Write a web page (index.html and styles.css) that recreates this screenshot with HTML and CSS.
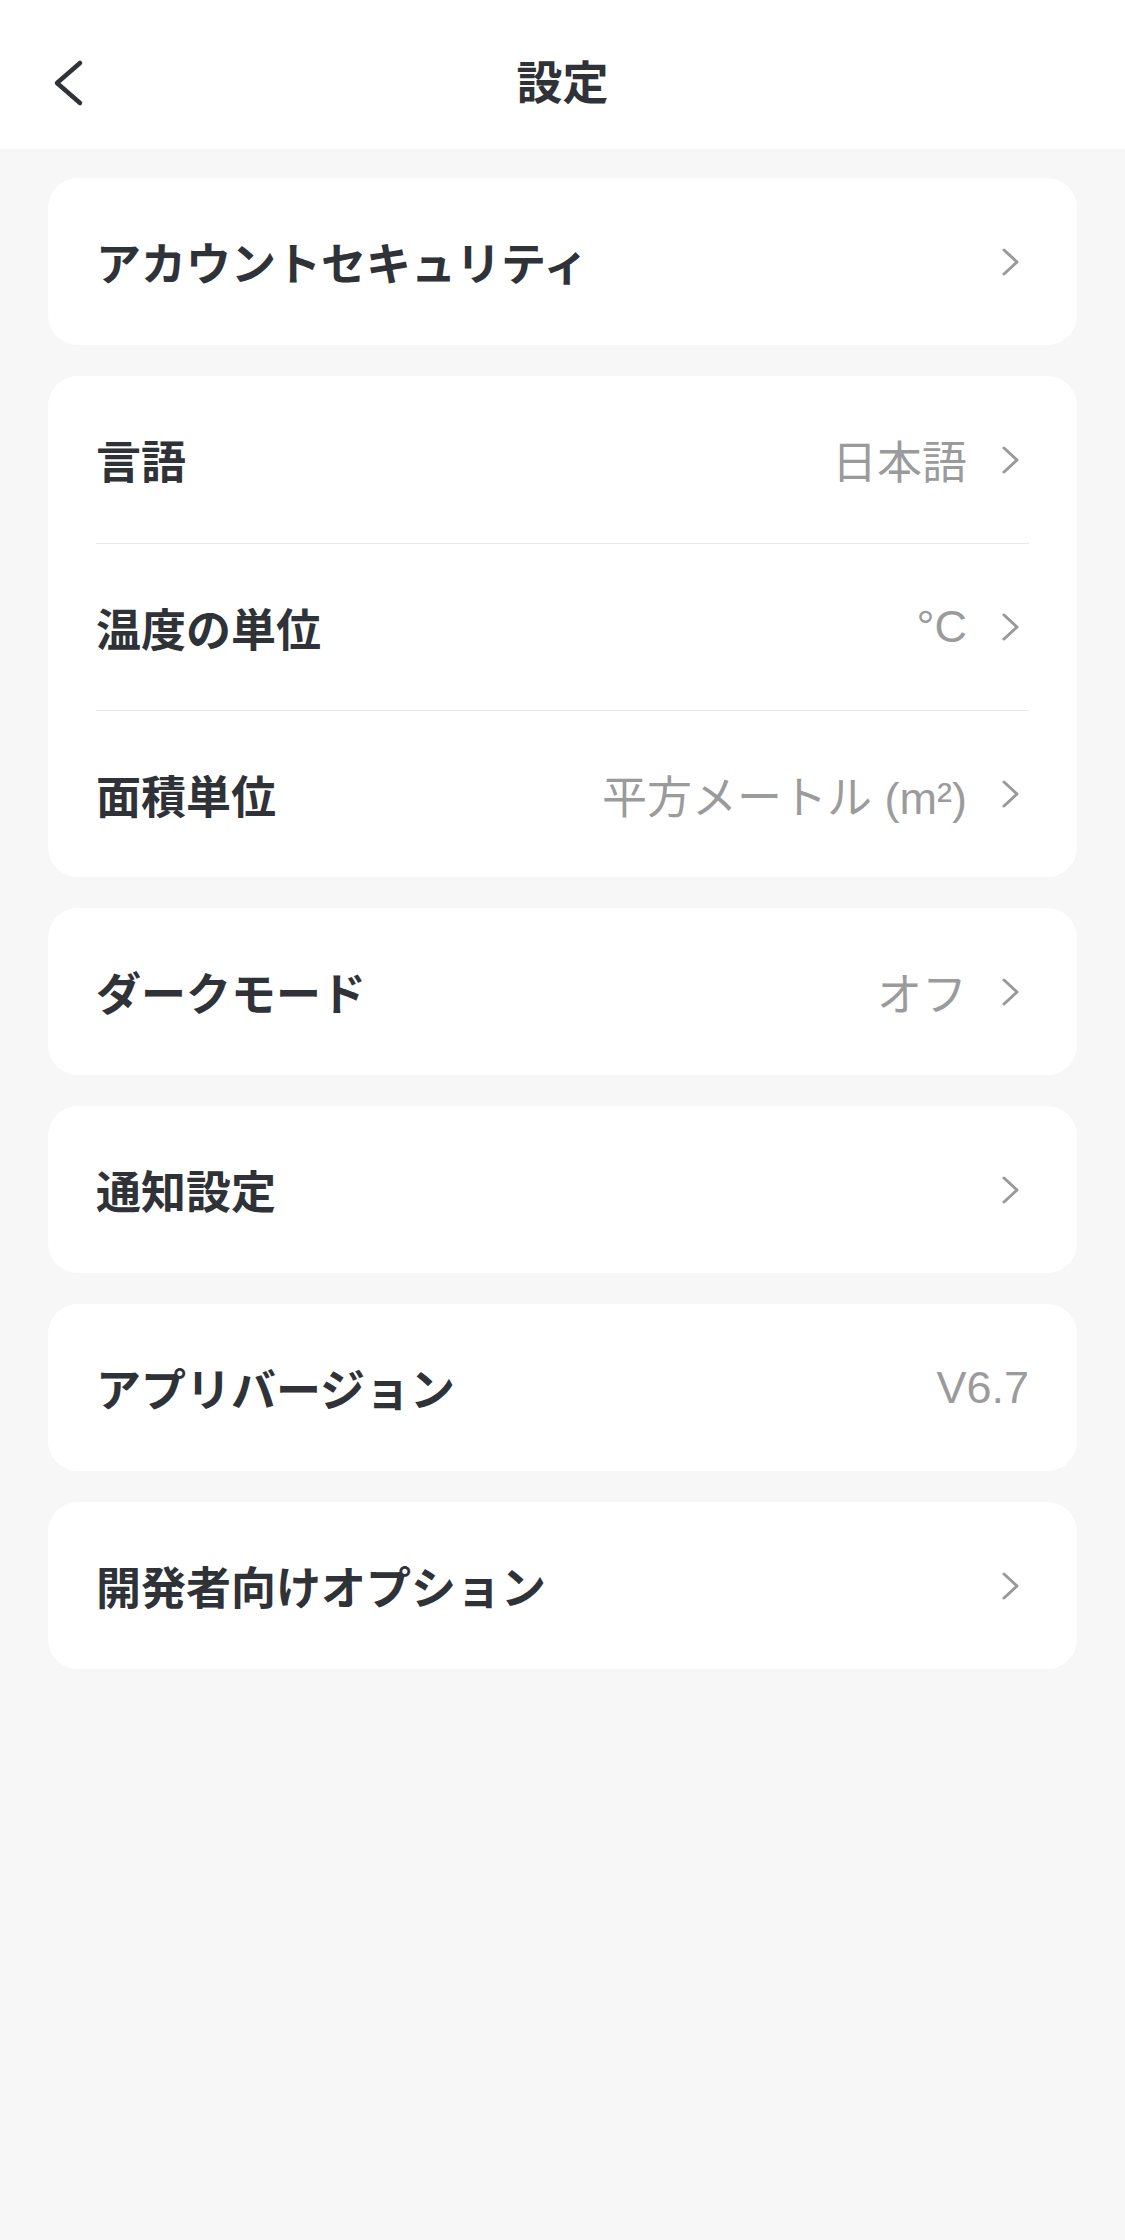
FILE: index.html
```html
<!DOCTYPE html>
<html lang="ja">
<head>
    <meta charset="UTF-8">
    <meta name="viewport" content="width=device-width, initial-scale=1.0">
    <title>設定</title>
    <link rel="stylesheet" href="styles.css">
</head>
<body>

    <!-- Top bar -->
    <header class="topbar">
        <div class="back">
            <svg width="32" height="48" viewBox="0 0 32 48">
                <polyline points="28,4 5,24 28,44" fill="none" stroke="#2f3237" stroke-width="4.5" stroke-linecap="round" stroke-linejoin="round"/>
            </svg>
        </div>
        <h1 class="title">設定</h1>
        <div></div>
    </header>

    <main class="list">
        <section class="card">
            <div class="row">
                <span class="label">アカウントセキュリティ</span>
                <span class="right">
                    <svg class="chev" width="28" height="28" viewBox="0 0 28 28"><polyline points="3,2 16,14 3,26"/></svg>
                </span>
            </div>
        </section>

        <section class="card">
            <div class="row">
                <span class="label">言語</span>
                <span class="right">
                    <span class="value">日本語</span>
                    <svg class="chev" width="28" height="28" viewBox="0 0 28 28"><polyline points="3,2 16,14 3,26"/></svg>
                </span>
            </div>
            <div class="row">
                <span class="label">温度の単位</span>
                <span class="right">
                    <span class="value">°C</span>
                    <svg class="chev" width="28" height="28" viewBox="0 0 28 28"><polyline points="3,2 16,14 3,26"/></svg>
                </span>
            </div>
            <div class="row">
                <span class="label">面積単位</span>
                <span class="right">
                    <span class="value">平方メートル (m²)</span>
                    <svg class="chev" width="28" height="28" viewBox="0 0 28 28"><polyline points="3,2 16,14 3,26"/></svg>
                </span>
            </div>
        </section>

        <section class="card">
            <div class="row">
                <span class="label">ダークモード</span>
                <span class="right">
                    <span class="value">オフ</span>
                    <svg class="chev" width="28" height="28" viewBox="0 0 28 28"><polyline points="3,2 16,14 3,26"/></svg>
                </span>
            </div>
        </section>

        <section class="card">
            <div class="row">
                <span class="label">通知設定</span>
                <span class="right">
                    <svg class="chev" width="28" height="28" viewBox="0 0 28 28"><polyline points="3,2 16,14 3,26"/></svg>
                </span>
            </div>
        </section>

        <section class="card">
            <div class="row">
                <span class="label">アプリバージョン</span>
                <span class="right">
                    <span class="value">V6.7</span>
                </span>
            </div>
        </section>

        <section class="card">
            <div class="row">
                <span class="label">開発者向けオプション</span>
                <span class="right">
                    <svg class="chev" width="28" height="28" viewBox="0 0 28 28"><polyline points="3,2 16,14 3,26"/></svg>
                </span>
            </div>
        </section>
    </main>

</body>
</html>
```

FILE: styles.css
```css
* {
    margin: 0;
    padding: 0;
    box-sizing: border-box;
}

body {
    font-family: "Liberation Sans", "Noto Sans CJK JP", sans-serif;
    background-color: #f7f7f7;
    color: #2f3237;
    min-height: 2240px;
}

.topbar {
    background-color: white;
    height: 149px;
    padding-top: 16px;
    display: grid;
    grid-template-columns: 1fr auto 1fr;
    align-items: center;
}

.back {
    padding-left: 52px;
    display: flex;
    align-items: center;
}

.title {
    font-size: 46px;
    font-weight: 700;
    line-height: 1;
}

.list {
    padding: 29px 48px;
    display: flex;
    flex-direction: column;
    gap: 31px;
}

.card {
    background-color: white;
    border-radius: 30px;
}

.row {
    margin: 0 48px;
    height: 167px;
    display: flex;
    align-items: center;
    justify-content: space-between;
}

.row + .row {
    border-top: 1px solid #e8e8e8;
}

.label {
    font-size: 45px;
    font-weight: 700;
}

.right {
    display: flex;
    align-items: center;
    gap: 34px;
}

.value {
    font-size: 45px;
    color: #9b9b9b;
}

.chev polyline {
    fill: none;
    stroke: #999;
    stroke-width: 3;
    stroke-linecap: round;
    stroke-linejoin: round;
}
```
